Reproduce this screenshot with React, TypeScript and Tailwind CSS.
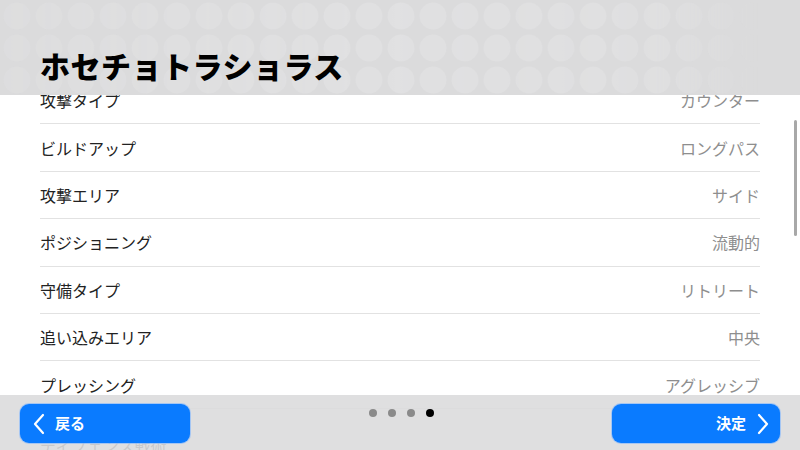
import React from 'react';

const rows: { label: string; value: string }[] = [
  { label: '攻撃タイプ', value: 'カウンター' },
  { label: 'ビルドアップ', value: 'ロングパス' },
  { label: '攻撃エリア', value: 'サイド' },
  { label: 'ポジショニング', value: '流動的' },
  { label: '守備タイプ', value: 'リトリート' },
  { label: '追い込みエリア', value: '中央' },
  { label: 'プレッシング', value: 'アグレッシブ' },
  { label: 'ディフェンス戦術', value: '' },
];

const jp = { fontFamily: '"Noto Sans CJK JP", "Noto Sans", sans-serif' };

const HeaderPattern = () => (
  <svg className="absolute inset-0" width="800" height="95" aria-hidden>
    <defs>
      <pattern id="dots" x="1" y="0" width="32" height="32" patternUnits="userSpaceOnUse">
        <circle cx="16" cy="16" r="13.5" fill="#e0e0e1" />
      </pattern>
      <linearGradient id="fade" x1="0" x2="1" y1="0" y2="0">
        <stop offset="0" stopColor="white" stopOpacity="0.5" />
        <stop offset="0.45" stopColor="white" stopOpacity="1" />
        <stop offset="0.82" stopColor="white" stopOpacity="0.85" />
        <stop offset="0.95" stopColor="white" stopOpacity="0" />
      </linearGradient>
      <mask id="m">
        <rect width="800" height="95" fill="url(#fade)" />
      </mask>
    </defs>
    <rect width="800" height="95" fill="url(#dots)" mask="url(#m)" />
  </svg>
);

const Chevron = ({ dir }: { dir: 'left' | 'right' }) => (
  <svg width="14" height="22" viewBox="0 0 14 22" fill="none">
    <path
      d={dir === 'left' ? 'M11 2 L3 11 L11 20' : 'M3 2 L11 11 L3 20'}
      stroke="white"
      strokeWidth="2.2"
      strokeLinecap="round"
      strokeLinejoin="round"
    />
  </svg>
);

export default function App() {
  return (
    <div className="relative flex h-[450px] w-[800px] flex-col overflow-hidden bg-white" style={jp}>
      <header className="relative z-10 h-[95px] shrink-0 bg-[#dbdbdc]">
        <HeaderPattern />
        <h1 className="relative pl-[40px] pt-[45px] text-[30px] font-black leading-[40px] tracking-[0.5px] text-black">
          ホセチョトラショラス
        </h1>
      </header>

      <div className="relative flex-1 overflow-hidden">
        <ul className="-mt-[18px] mx-[40px]">
          {rows.map((r, i) => (
            <li
              key={r.label}
              className={
                i === rows.length - 1
                  ? 'flex h-[47.4px] items-center justify-between pt-[26px] text-[16px]'
                  : 'flex h-[47.4px] items-center justify-between border-b border-[#e2e2e2] text-[16px]'
              }
            >
              <span className="text-[#222]">{r.label}</span>
              <span className="text-[#8e8e8e]">{r.value}</span>
            </li>
          ))}
        </ul>
        <div className="absolute right-[3px] top-[25px] h-[116px] w-[3px] rounded-full bg-[#a8a8a8]" />
      </div>

      <footer className="absolute bottom-0 left-0 flex h-[55px] w-full items-start justify-between bg-[#dcdcdd]/90 px-[20px] pt-[9px]">
        <button className="flex h-[39px] w-[170px] items-center gap-[9px] rounded-[9px] bg-[#0a7bff] pl-[12px] text-[15px] font-bold text-white ring-1 ring-[#7fb6ff]/60">
          <Chevron dir="left" />
          <span>戻る</span>
        </button>
        <div className="mt-[5px] flex gap-[11px]">
          <span className="h-[8px] w-[8px] rounded-full bg-[#8a8a8a]" />
          <span className="h-[8px] w-[8px] rounded-full bg-[#8a8a8a]" />
          <span className="h-[8px] w-[8px] rounded-full bg-[#8a8a8a]" />
          <span className="h-[8px] w-[8px] rounded-full bg-black" />
        </div>
        <button className="flex h-[39px] w-[168px] items-center justify-end gap-[10px] rounded-[9px] bg-[#0a7bff] pr-[10px] text-[15px] font-bold text-white ring-1 ring-[#7fb6ff]/60">
          <span>決定</span>
          <Chevron dir="right" />
        </button>
      </footer>
    </div>
  );
}
